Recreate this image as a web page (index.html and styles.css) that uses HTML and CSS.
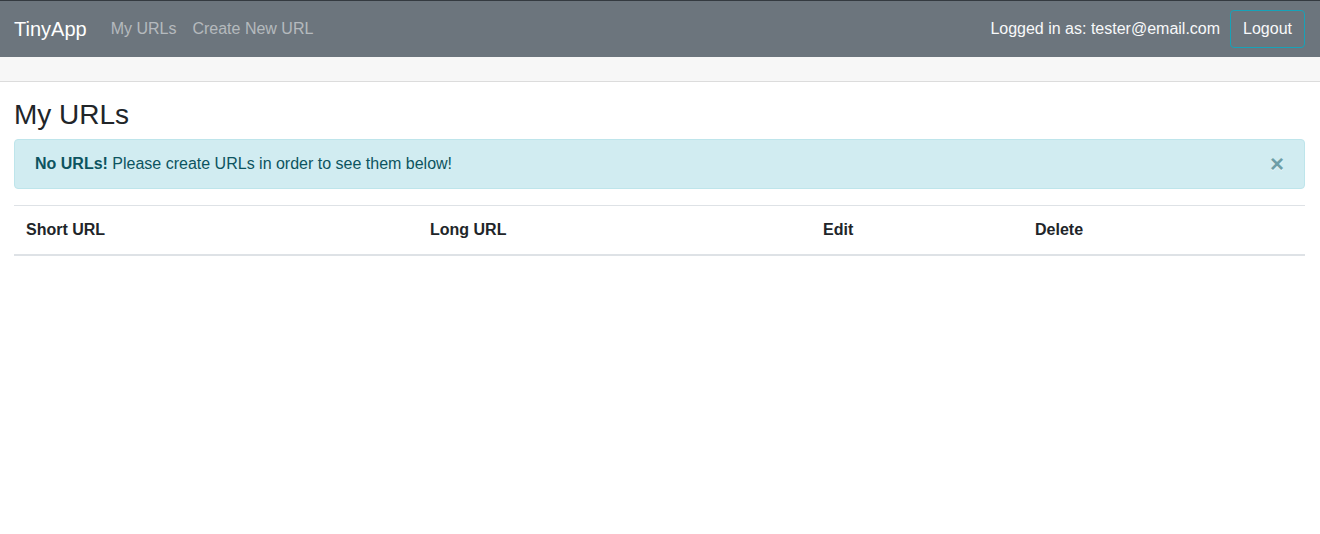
FILE: index.html
```html
<!DOCTYPE html>
<html lang="en">
<head>
<meta charset="utf-8">
<title>TinyApp</title>
<link rel="stylesheet" href="styles.css">
</head>
<body>
<nav class="navbar">
  <div class="nav-left">
    <a class="brand" href="#">TinyApp</a>
    <a class="nav-link" href="#">My URLs</a>
    <a class="nav-link" href="#">Create New URL</a>
  </div>
  <div class="nav-right">
    <span class="user">Logged in as: tester@email.com</span>
    <button class="btn-logout" type="button">Logout</button>
  </div>
</nav>
<div class="subbar"></div>
<main class="content">
  <h3 class="title">My URLs</h3>
  <div class="alert">
    <span><strong>No URLs!</strong> Please create URLs in order to see them below!</span>
    <button class="close" type="button" aria-label="Close">&times;</button>
  </div>
  <table class="table">
    <thead>
      <tr>
        <th class="c1">Short URL</th>
        <th class="c2">Long URL</th>
        <th class="c3">Edit</th>
        <th class="c4">Delete</th>
      </tr>
    </thead>
    <tbody></tbody>
  </table>
</main>
</body>
</html>
```

FILE: styles.css
```css
* { box-sizing: border-box; }
html, body { margin: 0; padding: 0; }
body {
  font-family: "Liberation Sans", Arial, sans-serif;
  font-size: 16px;
  line-height: 1.5;
  color: #212529;
  background: #fff;
  border-top: 1px solid #343a40;
}
.navbar {
  height: 56px;
  background: #6c757d;
  display: flex;
  align-items: center;
  justify-content: space-between;
  padding: 0 15px 0 14px;
}
.nav-left, .nav-right { display: flex; align-items: center; }
.brand {
  color: #fff;
  font-size: 20px;
  text-decoration: none;
  line-height: 30px;
  margin-right: 16px;
}
.nav-link {
  color: rgba(255,255,255,.5);
  text-decoration: none;
  padding: 8px;
}
.user { color: #f8f9fa; margin-right: 10px; }
.btn-logout {
  font-family: inherit;
  font-size: 16px;
  line-height: 24px;
  height: 38px;
  padding: 6px 12px;
  color: #f8f9fa;
  background: transparent;
  border: 1px solid #17a2b8;
  border-radius: 4px;
}
.subbar {
  height: 25px;
  background: #f7f7f7;
  border-bottom: 1px solid #dcdcdc;
}
.content { padding: 0 15px 0 14px; }
.title {
  font-size: 28px;
  font-weight: 500;
  line-height: 1.2;
  margin: 16px 0 7px;
}
.alert {
  position: relative;
  background: #d1ecf1;
  border: 1px solid #bee5eb;
  color: #0c5460;
  border-radius: 4px;
  padding: 12px 64px 12px 20px;
  margin-bottom: 16px;
}
.alert strong { font-weight: 700; }
.close {
  position: absolute;
  top: 0;
  right: 0;
  padding: 12px 20px;
  background: transparent;
  border: 0;
  font-family: inherit;
  font-size: 24px;
  font-weight: 700;
  line-height: 1;
  color: #0c5460;
  opacity: .5;
  text-shadow: 0 1px 0 #fff;
}
.table {
  width: 100%;
  border-collapse: collapse;
}
.table th {
  text-align: left;
  font-weight: 700;
  padding: 12px;
  border-top: 1px solid #dee2e6;
  border-bottom: 2px solid #dee2e6;
  vertical-align: bottom;
}
.c1 { width: 404px; }
.c2 { width: 393px; }
.c3 { width: 212px; }
```
